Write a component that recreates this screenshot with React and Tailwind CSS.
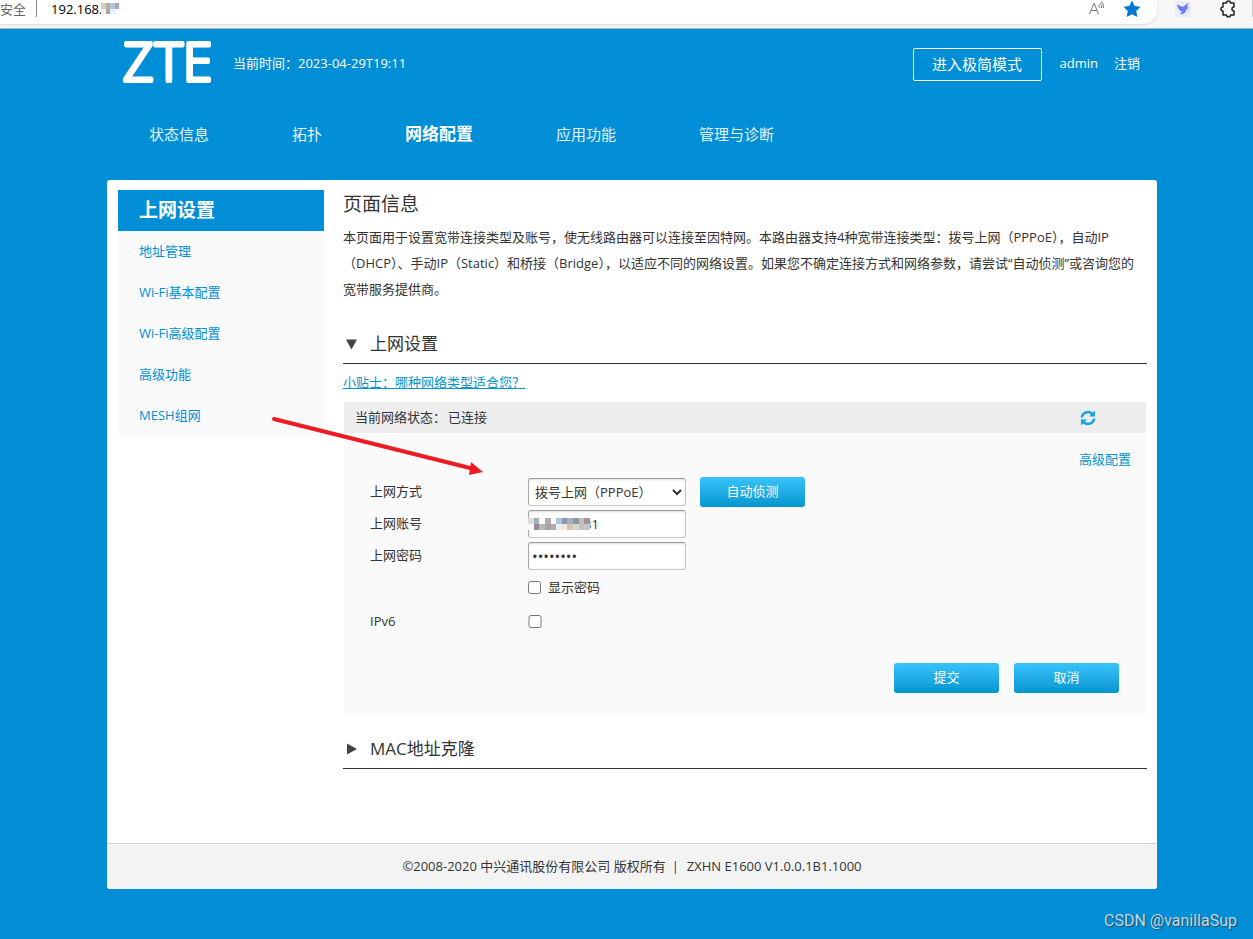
import clsx from "clsx";
import { useState } from "react";

const NAV_ITEMS = [
  { label: "状态信息", width: "w-[143px]" },
  { label: "拓扑", width: "w-[113px]" },
  { label: "网络配置", width: "w-[151px]", active: true },
  { label: "应用功能", width: "w-[143px]" },
  { label: "管理与诊断", width: "w-[143px]" },
];

const SIDE_ITEMS = ["地址管理", "Wi-Fi基本配置", "Wi-Fi高级配置", "高级功能", "MESH组网"];

const URL_MOSAIC = [
  ["#d5cdc8", "#c2a99b", "#a9c9e6", "#bd9cab"],
  ["#f3f3f3", "#a3a9ad", "#e4f0fa", "#fbfbfb"],
];

const ACCOUNT_MOSAIC = [
  ["#dcdcdc", "#a0b0bf", "#fafafa", "#b3abae", "#fafafa", "#aac6e2", "#8f93ab", "#a9b1bd", "#8b959b", "#c2bdbf", "#a99096"],
  ["#fafafa", "#9a8a8c", "#b9b9b9", "#a3a5a2", "#b5aaa6", "#e3eef7", "#f5e4d7", "#d3c4b8", "#dcd6d2", "#c9c2bb", "#c3c9cc"],
];

function Mosaic({ rows, className }) {
  return (
    <svg
      className={className}
      viewBox={`0 0 ${rows[0].length} ${rows.length}`}
      preserveAspectRatio="none"
      shapeRendering="crispEdges"
      aria-hidden="true"
    >
      {rows.map((row, y) =>
        row.map((fill, x) => <rect key={`${x}-${y}`} x={x} y={y} width="1" height="1" fill={fill} />)
      )}
    </svg>
  );
}

function BrowserBar() {
  return (
    <div className="flex h-[29px] items-start border-b border-[#b0b0b0] bg-[#f7f7f7]">
      <div className="flex h-6 flex-1 items-start rounded-br-[14px] bg-white shadow-sm">
        <span className="text-[13px] leading-[18px] whitespace-nowrap text-[#666]">安全</span>
        <span className="ml-2.5 h-[17px] w-px bg-[#8a8a8a]" />
        <span className="ml-3.5 text-[13px] leading-[18px] text-black">192.168.</span>
        <Mosaic rows={URL_MOSAIC} className="-ml-px mt-[3px] h-[11px] w-[18px]" />
        <div className="ml-auto flex items-start gap-[18px] pr-4">
          <svg className="h-[18px] w-[18px]" viewBox="0 0 18 18" fill="none" stroke="#777" aria-hidden="true">
            <path d="M2.500 14 7 3l4.500 11M4 10.500h6M11.500 5q1 1 .8 2.800M13 3q2 2 1.500 5M14.500 1.500q2.800 2.500 1.800 6.500" />
          </svg>
          <svg className="h-[18px] w-[18px]" viewBox="0 0 18 18" fill="#0078d4" aria-hidden="true">
            <path d="m9 1.500 2.300 4.900 5.400.8-4 3.700 1 5.400L9 13.700l-4.700 2.600 1-5.400-4-3.700 5.400-.8z" stroke="#0078d4" strokeLinejoin="round" />
          </svg>
        </div>
      </div>
      <div className="flex w-24 items-start pl-[18px]">
        <svg className="mt-px h-4 w-4" viewBox="0 0 16 16" aria-hidden="true">
          <rect width="16" height="16" rx="2" fill="#e9edfb" />
          <path d="M2 3.500 8 6l5.500-4.500L12 6.500h2.500l-3 1.800Q11 13 5 13.500l2-2.700Q3 9 2 3.500" fill="#6a7df2" />
        </svg>
        <svg className="ml-7 h-[18px] w-[18px]" viewBox="0 0 18 18" fill="none" stroke="#222" strokeWidth="1.500" aria-hidden="true">
          <path d="M4 3h3.500a2 2 0 0 1 4 0H15v4a2 2 0 0 0 0 4v4h-3.500a2 2 0 0 1-4 0H4v-4a2 2 0 0 1 0-4z" strokeLinejoin="round" />
        </svg>
        <span className="ml-[15px] h-[17px] w-px bg-[#c4c4c4]" />
      </div>
    </div>
  );
}

function Logo() {
  return (
    <svg className="h-[46px] w-[90px] overflow-visible" viewBox="0 0 90 46" role="img" aria-label="ZTE">
      <text
        x="0 32 60"
        y="40"
        fontFamily="Open Sans, sans-serif"
        fontSize="53"
        fontWeight="300"
        fill="#fff"
        stroke="#fff"
        strokeWidth="4"
        strokeLinejoin="round"
      >
        ZTE
      </text>
    </svg>
  );
}

function Header() {
  return (
    <header className="text-white">
      <div className="flex h-[70px] items-center pr-[17px] pl-4">
        <Logo />
        <span className="ml-5 text-[13px]">当前时间：2023-04-29T19:11</span>
        <button className="ml-auto h-[33px] w-[129px] rounded-xs border border-white text-[15px]">进入极简模式</button>
        <a href="#admin" className="ml-[18px] text-[13px]">admin</a>
        <a href="#logout" className="ml-4 text-[13px]">注销</a>
      </div>
      <nav className="flex h-[81px] items-start pt-[23px] pl-[42px] text-[15px]">
        {NAV_ITEMS.map(({ label, width, active }) => (
          <a
            key={label}
            href={`#${label}`}
            className={clsx("leading-6 whitespace-nowrap", width, active ? "text-[17px] font-bold" : "text-white/90")}
          >
            {label}
          </a>
        ))}
      </nav>
    </header>
  );
}

function Sidebar() {
  return (
    <aside className="w-[206px] shrink-0 self-start bg-[#fafafa]">
      <h2 className="bg-[#008ed6] pl-[21px] text-[19px] leading-[41px] font-bold text-white">上网设置</h2>
      <ul>
        {SIDE_ITEMS.map((item) => (
          <li key={item}>
            <a href={`#${item}`} className="block pl-[21px] text-[13px] leading-[41px] text-[#008ed6]">{item}</a>
          </li>
        ))}
      </ul>
    </aside>
  );
}

function SectionTitle({ open, onToggle, children }) {
  return (
    <h3 className="border-b border-[#333]">
      <button onClick={onToggle} aria-expanded={open} className="flex h-[39px] w-full items-center gap-3 pl-[3px] text-left text-[17px]">
        <svg className="h-3 w-3" viewBox="0 0 12 12" fill="#444" aria-hidden="true">
          <path d={open ? "M0 1.500h11L5.500 11.500z" : "M1 .5v11L11 6z"} />
        </svg>
        {children}
      </button>
    </h3>
  );
}

function ActionButton({ children, ...props }) {
  return (
    <button className="h-[30px] w-[105px] rounded-[3px] bg-linear-to-b from-[#36c3fb] to-[#0096cf] text-[13px] text-white" {...props}>
      {children}
    </button>
  );
}

const FIELD = "h-7 w-[158px] rounded-[3px] border border-[#c4c4c4] border-t-[#999] border-l-[#aaa] bg-white shadow-[inset_0_1px_2px_#ddd]";

function InternetForm() {
  const [showPassword, setShowPassword] = useState(false);

  return (
    <form className="bg-[#fafafa] pb-[22px]" onSubmit={(e) => e.preventDefault()}>
      <div className="flex h-[45px] items-center justify-end pt-2 pr-[15px]">
        <a href="#advanced" className="text-[#0096cf]">高级配置</a>
      </div>
      <div className="grid grid-cols-[158px_1fr] items-center gap-y-1 pl-[26px]">
        <label htmlFor="mode">上网方式</label>
        <div className="flex h-7 items-center gap-3.5">
          <select id="mode" className={clsx(FIELD, "pl-0.5")}>
            <option>拨号上网（PPPoE）</option>
          </select>
          <ActionButton type="button">自动侦测</ActionButton>
        </div>
        <label htmlFor="account">上网账号</label>
        <div className="relative">
          <input id="account" defaultValue="31" className={clsx(FIELD, "pl-[55px]")} />
          <Mosaic rows={ACCOUNT_MOSAIC} className="absolute top-2 left-0 h-3 w-[62px]" />
        </div>
        <label htmlFor="password">上网密码</label>
        <input
          id="password"
          type={showPassword ? "text" : "password"}
          defaultValue="password"
          className={clsx(FIELD, "pl-[3px] text-[15px]")}
        />
      </div>
      <div className="mt-2 grid grid-cols-[158px_1fr] items-center gap-y-3.5 pl-[26px]">
        <label className="col-start-2 flex items-center gap-[7px]">
          <input type="checkbox" checked={showPassword} onChange={(e) => setShowPassword(e.target.checked)} />
          显示密码
        </label>
        <label htmlFor="ipv6">IPv6</label>
        <input id="ipv6" type="checkbox" className="w-3.5" />
      </div>
      <div className="mt-8 flex justify-end gap-[15px] pr-[27px]">
        <ActionButton type="submit">提交</ActionButton>
        <ActionButton type="reset">取消</ActionButton>
      </div>
    </form>
  );
}

function Content() {
  const [open, setOpen] = useState({ internet: true, mac: false });
  const toggle = (name) => setOpen({ ...open, [name]: !open[name] });

  return (
    <section className="min-w-0 flex-1">
      <h1 className="text-[19px] leading-7">页面信息</h1>
      <p className="mt-1.5 pr-1 leading-[26px]">
        本页面用于设置宽带连接类型及账号，使无线路由器可以连接至因特网。本路由器支持4种宽带连接类型：拨号上网（PPPoE），自动IP（DHCP）、手动IP（Static）和桥接（Bridge），以适应不同的网络设置。如果您不确定连接方式和网络参数，请尝试“自动侦测”或咨询您的宽带服务提供商。
      </p>
      <div className="mt-[22px]">
        <SectionTitle open={open.internet} onToggle={() => toggle("internet")}>上网设置</SectionTitle>
        {open.internet && (
          <>
            <div className="h-[38px]">
              <a href="#tips" className="leading-9 text-[#0096cf] underline">小贴士：哪种网络类型适合您？</a>
            </div>
            <div className="mx-px">
              <div className="flex h-[31px] items-center bg-[#eee] pr-[50px] pl-[11px]">
                <span>当前网络状态：</span>
                <span className="ml-0.5">已连接</span>
                <button className="ml-auto" aria-label="刷新">
                  <svg className="h-4 w-4" viewBox="0 0 16 16" fill="none" stroke="#14a6e2" strokeWidth="2.500" aria-hidden="true">
                    <path d="M1.800 7.500A6.200 5.800 0 0 1 12.500 4M14.200 8.500A6.200 5.800 0 0 1 3.500 12" />
                    <path d="M15 .5v6H9zM1 15.500v-6h6z" fill="#14a6e2" stroke="none" />
                  </svg>
                </button>
              </div>
              <InternetForm />
            </div>
          </>
        )}
      </div>
      <div className="mt-3.5">
        <SectionTitle open={open.mac} onToggle={() => toggle("mac")}>MAC地址克隆</SectionTitle>
      </div>
    </section>
  );
}

function Arrow() {
  return (
    <svg className="pointer-events-none absolute top-[235px] left-[165px] h-[62px] w-[214px]" viewBox="0 0 214 62" aria-hidden="true">
      <path d="M2 4 200 53.500" stroke="#ed1c24" strokeWidth="4" strokeLinecap="round" />
      <path d="m199 47 12 10-14 3z" fill="#ed1c24" />
    </svg>
  );
}

export default function App() {
  return (
    <div className="flex min-h-screen flex-col bg-[#008ed6] font-['Open_Sans','Noto_Sans_CJK_SC',sans-serif] text-[13px] text-[#333]">
      <BrowserBar />
      <div className="pl-[11px]">
        <div className="mx-auto max-w-[1050px]">
          <Header />
          <div className="relative overflow-hidden rounded-[3px] bg-white">
            <main className="flex gap-[19px] px-2.5 pt-2.5 pb-[74px] pl-[11px]">
              <Sidebar />
              <Content />
            </main>
            <footer className="border-t border-[#d5d5d5] bg-[#f3f3f3] text-center leading-[45px]">
              ©2008-2020 中兴通讯股份有限公司 版权所有
              <span className="mr-2 ml-1.5">|</span>
              ZXHN E1600 V1.0.0.1B1.1000
            </footer>
            <Arrow />
          </div>
        </div>
      </div>
      <div className="mt-auto pr-4 pb-1.5 text-right font-['Roboto',sans-serif] text-[16px] text-[#bfd9ea] [text-shadow:1px_1px_1px_#345]">
        CSDN @vanillaSup
      </div>
    </div>
  );
}
